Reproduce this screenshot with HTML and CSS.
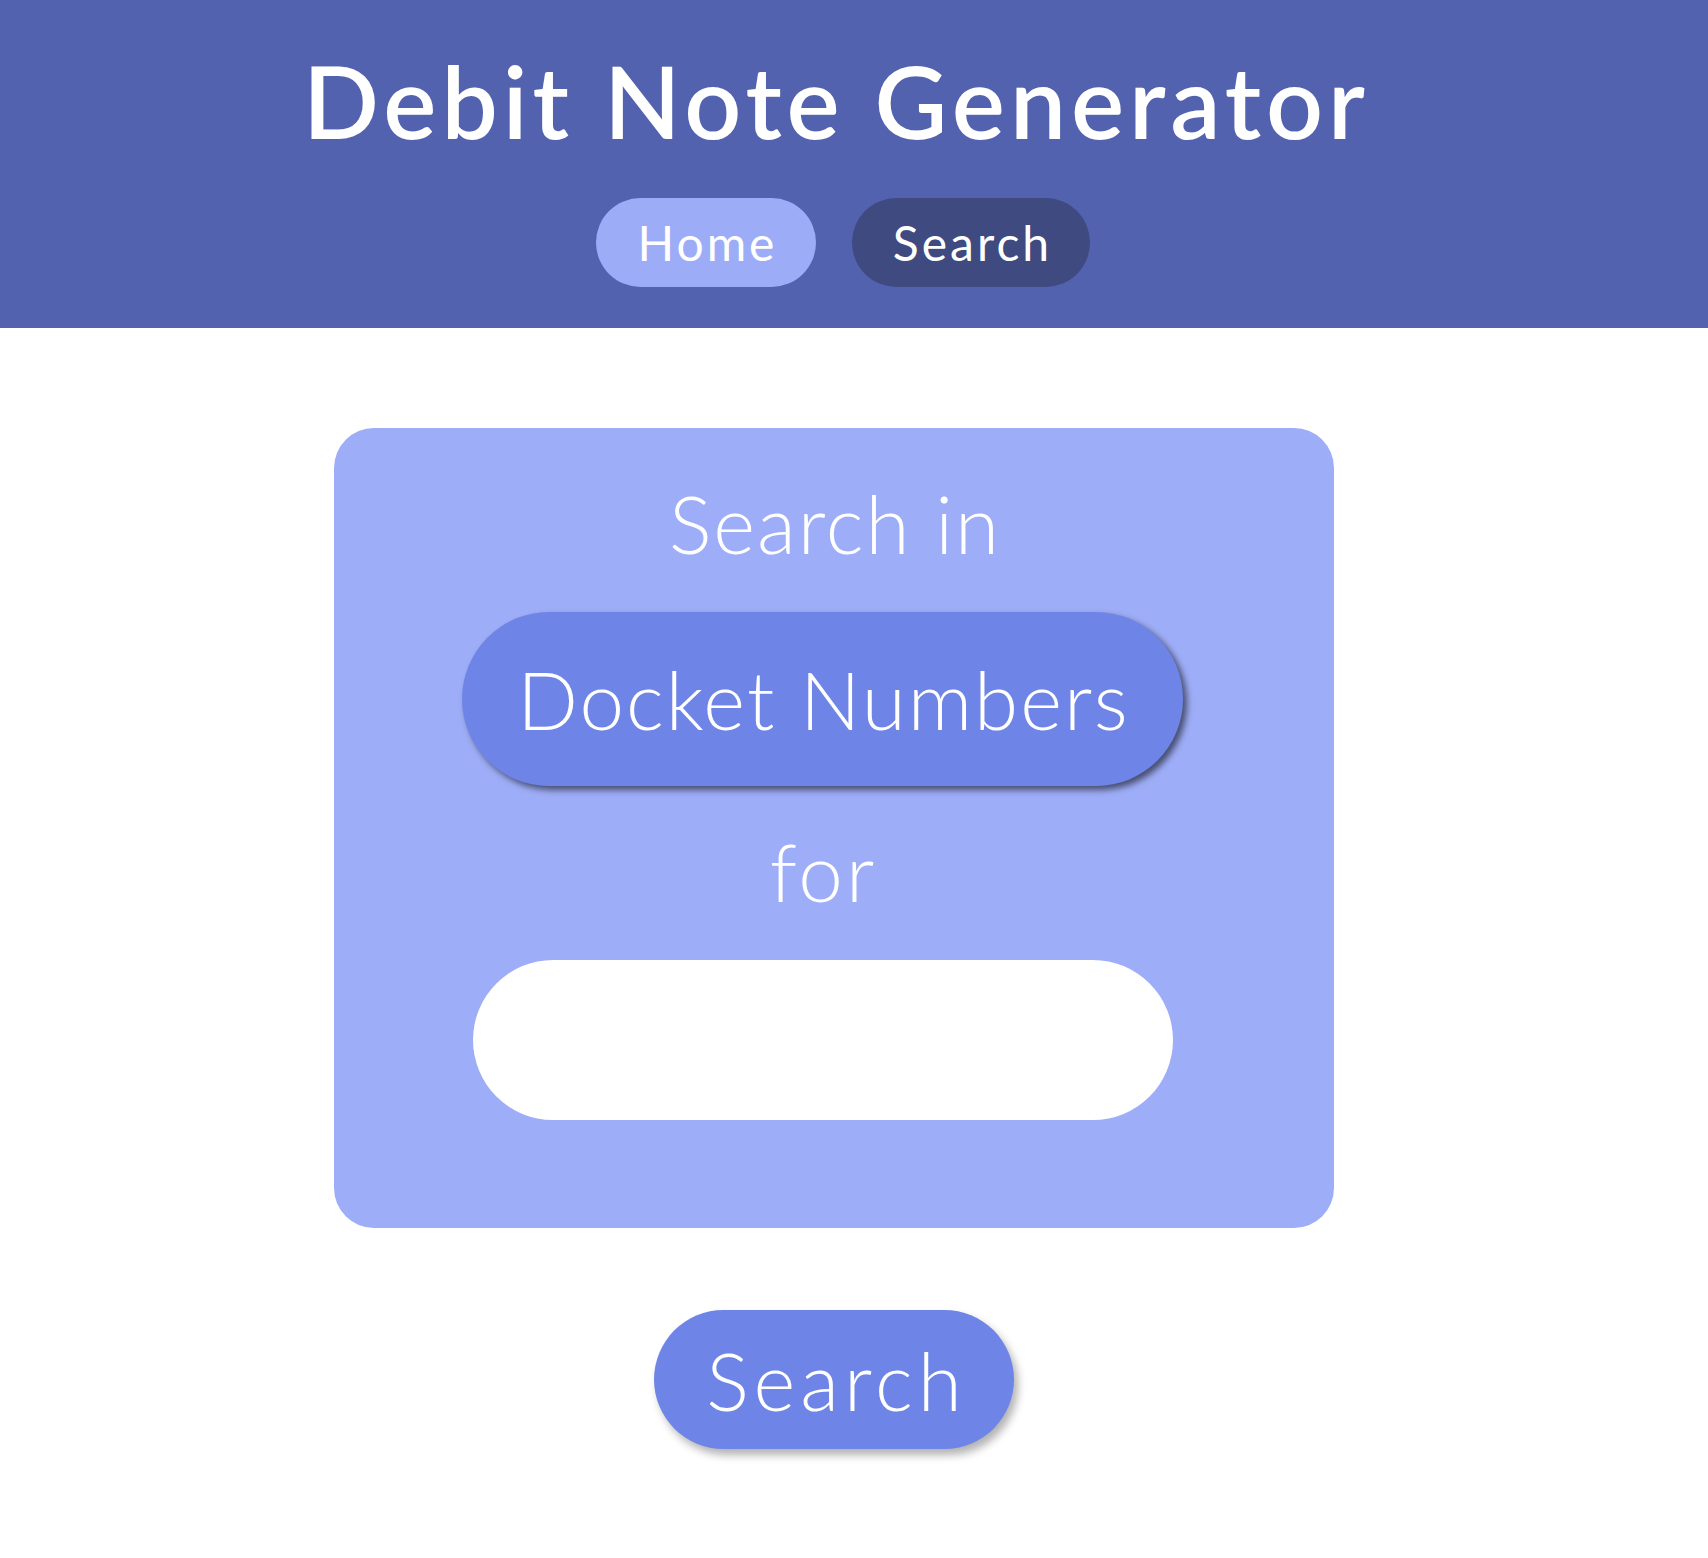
FILE: index.html
```html
<!DOCTYPE html>
<html lang="en">
<head>
<meta charset="utf-8">
<title>Debit Note Generator</title>
<link rel="stylesheet" href="styles.css">
</head>
<body>
<header class="header">
  <div class="header-inner">
    <h1 class="title">Debit Note Generator</h1>
    <nav class="nav">
      <a class="pill pill-home" href="#">Home</a>
      <a class="pill pill-search" href="#">Search</a>
    </nav>
  </div>
</header>
<main class="main">
  <section class="card">
    <div class="label label-in">Search in</div>
    <button class="docket" type="button">Docket Numbers</button>
    <div class="label label-for">for</div>
    <input class="query" type="text" aria-label="Search query">
  </section>
  <button class="search-btn" type="button">Search</button>
</main>
</body>
</html>
```

FILE: styles.css
```css
* { box-sizing: border-box; }

html, body {
  margin: 0;
  padding: 0;
  background: #ffffff;
  font-family: "Lato", "Open Sans", "Liberation Sans", sans-serif;
  color: #ffffff;
}

.header {
  background: #5262ae;
  height: 328px;
}

.header-inner {
  margin-right: 40px;
  display: flex;
  flex-direction: column;
  align-items: center;
  padding-top: 50px;
}

.title {
  margin: 0;
  font-size: 100px;
  line-height: 1;
  font-weight: 600;
  letter-spacing: 5px;
  text-indent: 5px;
  color: #ffffff;
}

.nav {
  display: flex;
  gap: 36px;
  margin-top: 48px;
  padding-left: 18px;
}

.pill {
  display: flex;
  align-items: center;
  justify-content: center;
  height: 89px;
  border-radius: 45px;
  font-size: 48px;
  font-weight: 400;
  letter-spacing: 3px;
  text-indent: 3px;
  color: #ffffff;
  text-decoration: none;
}

.pill-home {
  width: 220px;
  background: #9dacf7;
}

.pill-search {
  width: 238px;
  background: #3e4a80;
}

.main {
  margin-right: 40px;
  display: flex;
  flex-direction: column;
  align-items: center;
  padding-top: 100px;
  padding-bottom: 60px;
}

.card {
  width: 1000px;
  height: 800px;
  border-radius: 40px;
  background: #9eadf7;
  display: flex;
  flex-direction: column;
  align-items: center;
  padding-top: 55px;
}

.label {
  font-size: 80px;
  line-height: 1;
  font-weight: 300;
  letter-spacing: 2px;
  text-indent: 2px;
  color: #ffffff;
}

.label-for {
  margin-top: 45px;
  margin-right: 23px;
  letter-spacing: 3px;
}

.docket {
  margin-top: 49px;
  margin-right: 23px;
  width: 721px;
  height: 174px;
  border: none;
  border-radius: 87px;
  background: #6e85e7;
  color: #ffffff;
  font-family: inherit;
  font-size: 80px;
  font-weight: 300;
  letter-spacing: 2px;
  text-indent: 2px;
  box-shadow: 4px 4px 6px rgba(0, 0, 0, 0.55);
  cursor: pointer;
}

.query {
  margin-top: 49px;
  margin-right: 23px;
  width: 700px;
  height: 160px;
  border: none;
  border-radius: 80px;
  background: #ffffff;
  outline: none;
  font-family: inherit;
  font-size: 48px;
  padding: 0 60px;
}

.search-btn {
  margin-top: 82px;
  width: 360px;
  height: 139px;
  border: none;
  border-radius: 70px;
  background: #6e85e7;
  color: #ffffff;
  font-family: inherit;
  font-size: 80px;
  font-weight: 300;
  letter-spacing: 5px;
  text-indent: 5px;
  box-shadow: 4px 6px 8px rgba(0, 0, 0, 0.3);
  cursor: pointer;
}
```
